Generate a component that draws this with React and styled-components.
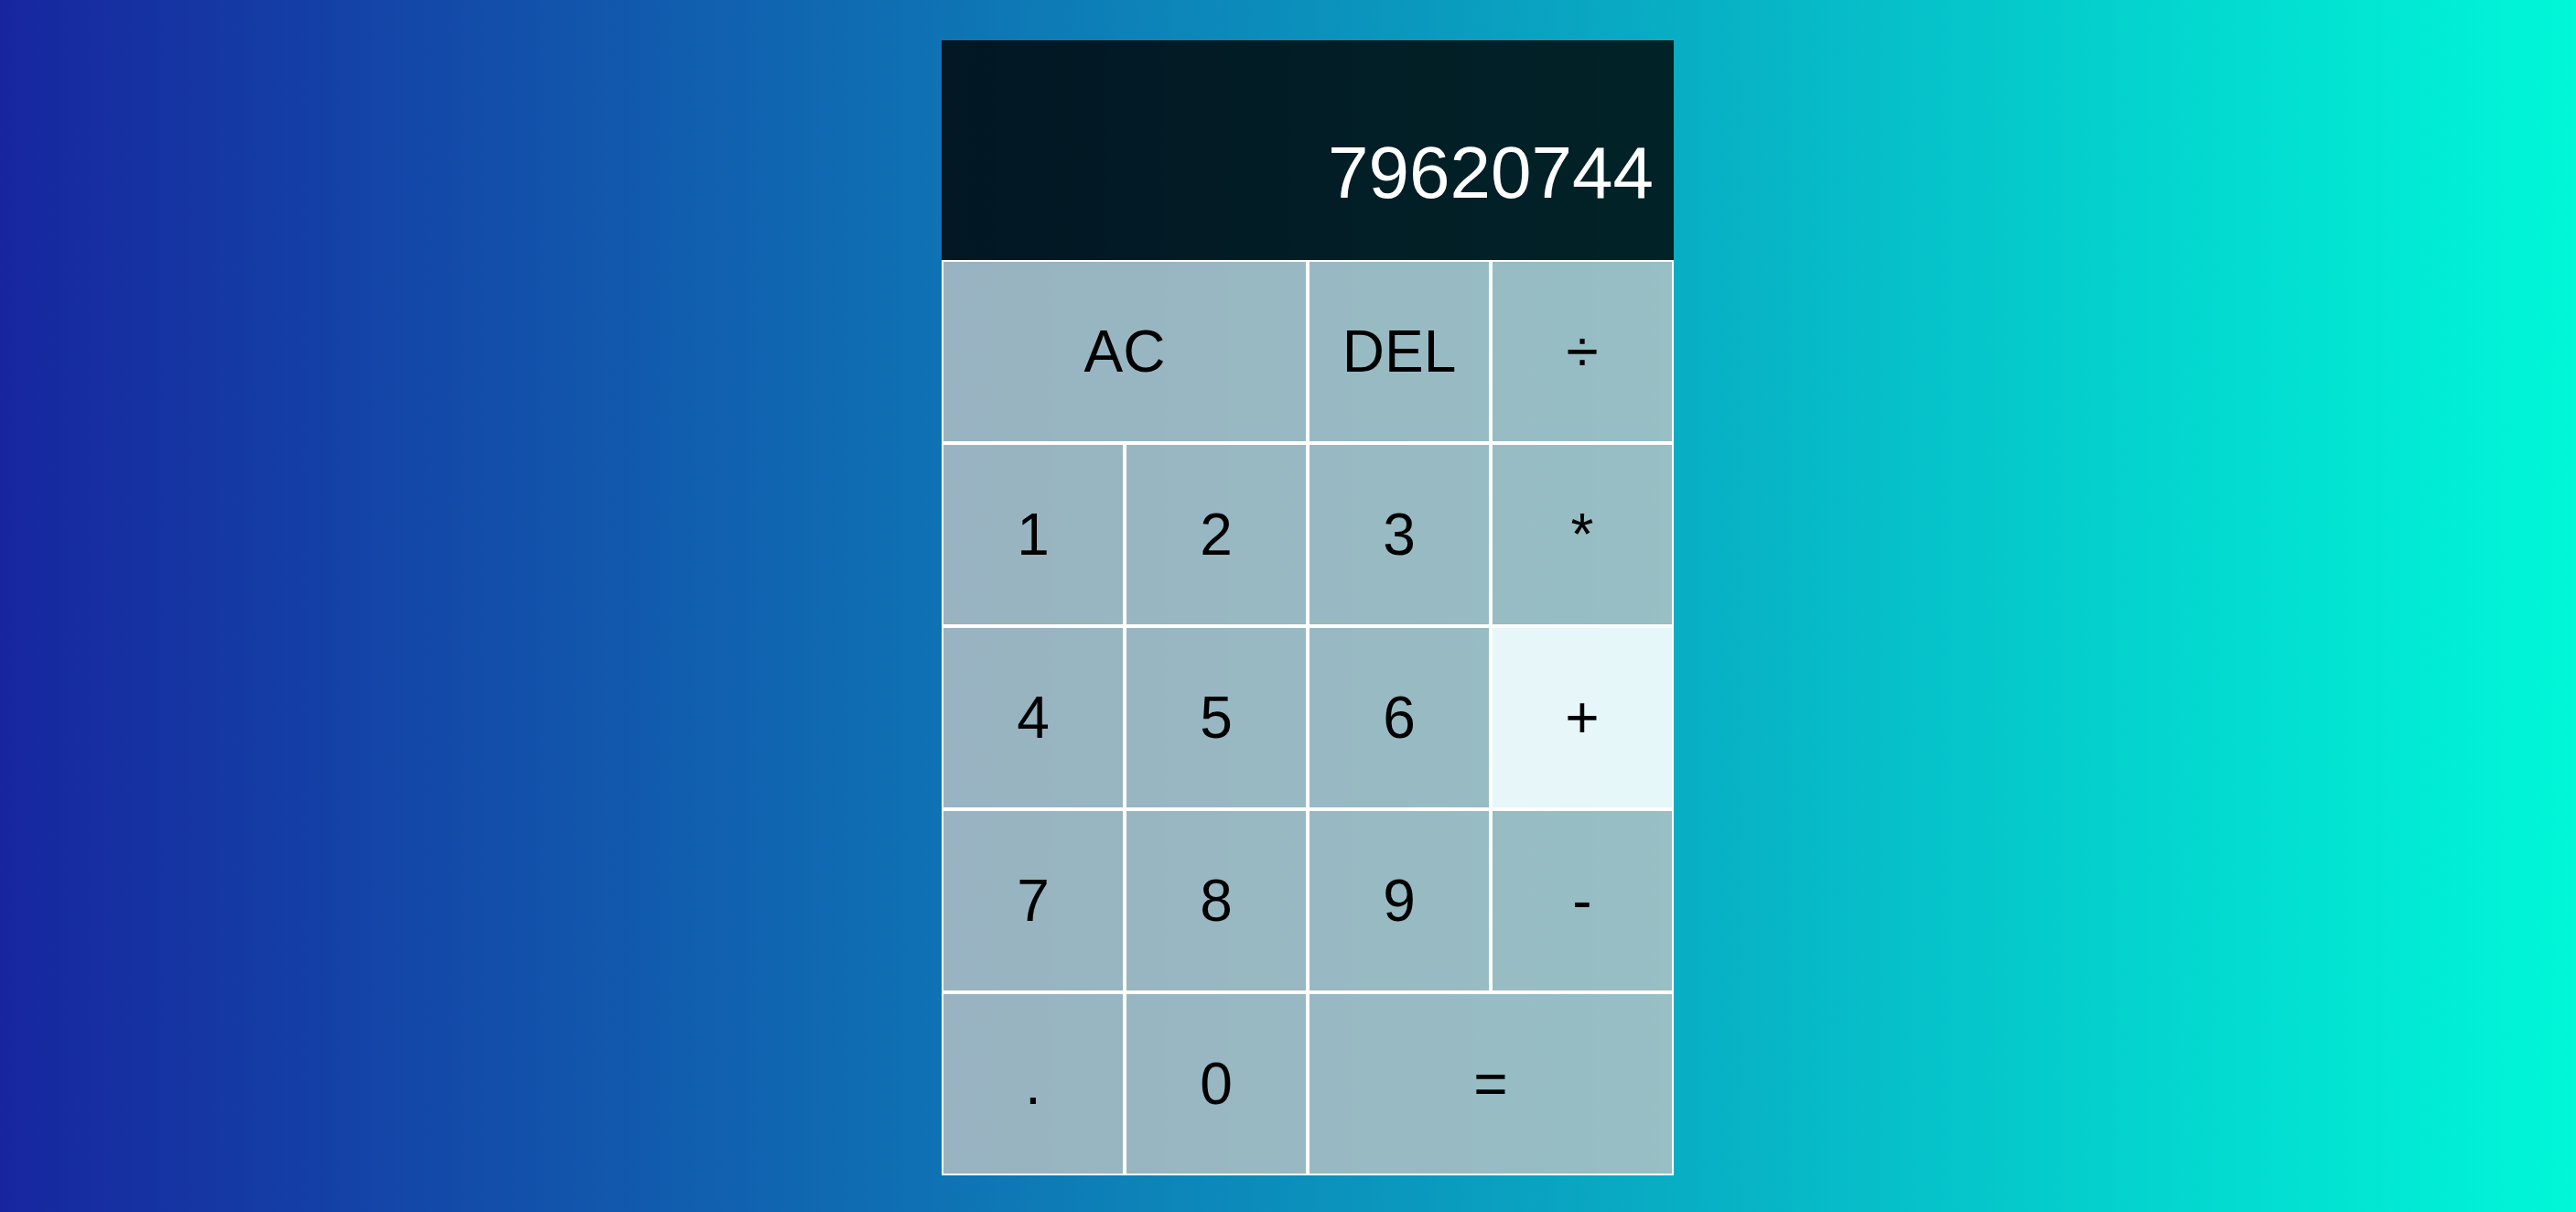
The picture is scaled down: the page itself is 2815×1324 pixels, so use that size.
import React from "react";
import styled, { createGlobalStyle } from "styled-components";

const GlobalStyle = createGlobalStyle`
  *, *::before, *::after { box-sizing: border-box; }
  html, body { margin: 0; padding: 0; }
  body {
    min-height: 100vh;
    background: linear-gradient(to right, rgb(23, 38, 159), rgb(0, 247, 216));
    font-family: "Liberation Sans", Arial, sans-serif;
  }
`;

const Page = styled.main`
  min-height: 100vh;
  display: flex;
  justify-content: center;
  align-items: flex-start;
  padding: 44px 0 0 43px;
`;

const Calculator = styled.div`
  display: grid;
  grid-template-columns: repeat(4, 200px);
  grid-template-rows: 240px repeat(5, 200px);
`;

const Output = styled.div`
  grid-column: 1 / -1;
  background: rgba(0, 0, 0, 0.8);
  display: flex;
  flex-direction: column;
  align-items: flex-end;
  justify-content: space-around;
  padding: 24px 22px;
  word-wrap: break-word;
  word-break: break-all;
`;

const PreviousOperand = styled.div`
  color: rgba(255, 255, 255, 0.75);
  font-size: 48px;
`;

const CurrentOperand = styled.div`
  color: white;
  font-size: 80px;
`;

const Key = styled.button`
  grid-column: span ${(p) => p.$span || 1};
  border: 2px solid white;
  margin: 0;
  padding: 0;
  outline: none;
  cursor: pointer;
  font-family: "Liberation Sans", Arial, sans-serif;
  font-size: 64px;
  color: black;
  background: ${(p) =>
    p.$active ? "rgba(255, 255, 255, 0.9)" : "rgba(187, 195, 196, 0.8)"};
`;

const keys = [
  { label: "AC", span: 2 },
  { label: "DEL" },
  { label: "÷" },
  { label: "1" },
  { label: "2" },
  { label: "3" },
  { label: "*" },
  { label: "4" },
  { label: "5" },
  { label: "6" },
  { label: "+", active: true },
  { label: "7" },
  { label: "8" },
  { label: "9" },
  { label: "-" },
  { label: "." },
  { label: "0" },
  { label: "=", span: 2 },
];

export default function App() {
  return (
    <>
      <GlobalStyle />
      <Page>
        <Calculator>
          <Output>
            <PreviousOperand></PreviousOperand>
            <CurrentOperand>79620744</CurrentOperand>
          </Output>
          {keys.map((k) => (
            <Key key={k.label} $span={k.span} $active={k.active}>
              {k.label}
            </Key>
          ))}
        </Calculator>
      </Page>
    </>
  );
}
